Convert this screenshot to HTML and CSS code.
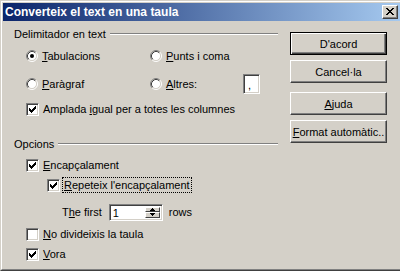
FILE: index.html
```html
<!DOCTYPE html>
<html>
<head>
<meta charset="utf-8">
<link rel="stylesheet" href="styles.css">
</head>
<body>
<div class="window">
  <div class="frame">
    <div class="titlebar">
      <span class="title">Converteix el text en una taula</span>
      <span class="close"><svg width="8" height="7" viewBox="0 0 8 7" shape-rendering="crispEdges"><path d="M0 0h2v1H0zM6 0h2v1H6zM1 1h2v1H1zM5 1h2v1H5zM2 2h4v1H2zM3 3h2v1H3zM2 4h4v1H2zM1 5h2v1H1zM5 5h2v1H5zM0 6h2v1H0zM6 6h2v1H6z" fill="#000"/></svg></span>
    </div>
    <div class="body">
      <div class="main">
        <div class="sep sep-first"><span class="sep-label">Delimitador en text</span><span class="sep-line"></span></div>
        <div class="row row-tab">
          <div class="opt col1">
            <svg class="radio" width="12" height="12" viewBox="0 0 12 12"><circle cx="6" cy="6" r="4.5" fill="#fff"/><path d="M2.11 9.89A5.5 5.5 0 0 1 9.89 2.11" stroke="#808080" fill="none"/><path d="M9.89 2.11A5.5 5.5 0 0 1 2.11 9.89" stroke="#fff" fill="none"/><path d="M2.82 9.18A4.5 4.5 0 0 1 9.18 2.82" stroke="#404040" fill="none"/><path d="M9.18 2.82A4.5 4.5 0 0 1 2.82 9.18" stroke="#d4d0c8" fill="none"/><circle cx="6" cy="6" r="2" fill="#000"/></svg>
            <span><u>T</u>abulacions</span>
          </div>
          <div class="opt">
            <svg class="radio" width="12" height="12" viewBox="0 0 12 12"><circle cx="6" cy="6" r="4.5" fill="#fff"/><path d="M2.11 9.89A5.5 5.5 0 0 1 9.89 2.11" stroke="#808080" fill="none"/><path d="M9.89 2.11A5.5 5.5 0 0 1 2.11 9.89" stroke="#fff" fill="none"/><path d="M2.82 9.18A4.5 4.5 0 0 1 9.18 2.82" stroke="#404040" fill="none"/><path d="M9.18 2.82A4.5 4.5 0 0 1 2.82 9.18" stroke="#d4d0c8" fill="none"/></svg>
            <span><u>P</u>unts i coma</span>
          </div>
        </div>
        <div class="row row-par">
          <div class="opt col1">
            <svg class="radio" width="12" height="12" viewBox="0 0 12 12"><circle cx="6" cy="6" r="4.5" fill="#fff"/><path d="M2.11 9.89A5.5 5.5 0 0 1 9.89 2.11" stroke="#808080" fill="none"/><path d="M9.89 2.11A5.5 5.5 0 0 1 2.11 9.89" stroke="#fff" fill="none"/><path d="M2.82 9.18A4.5 4.5 0 0 1 9.18 2.82" stroke="#404040" fill="none"/><path d="M9.18 2.82A4.5 4.5 0 0 1 2.82 9.18" stroke="#d4d0c8" fill="none"/></svg>
            <span><u>P</u>aràgraf</span>
          </div>
          <div class="opt col2">
            <svg class="radio" width="12" height="12" viewBox="0 0 12 12"><circle cx="6" cy="6" r="4.5" fill="#fff"/><path d="M2.11 9.89A5.5 5.5 0 0 1 9.89 2.11" stroke="#808080" fill="none"/><path d="M9.89 2.11A5.5 5.5 0 0 1 2.11 9.89" stroke="#fff" fill="none"/><path d="M2.82 9.18A4.5 4.5 0 0 1 9.18 2.82" stroke="#404040" fill="none"/><path d="M9.18 2.82A4.5 4.5 0 0 1 2.82 9.18" stroke="#d4d0c8" fill="none"/></svg>
            <span><u>A</u>ltres:</span>
          </div>
          <div class="field sep-field">,</div>
        </div>
        <div class="row row-amp">
          <div class="opt">
            <span class="cb"><svg width="7" height="7" viewBox="0 0 7 7" shape-rendering="crispEdges"><path d="M0 2h1v3H0zM1 3h1v3H1zM2 4h1v3H2zM3 3h1v3H3zM4 2h1v3H4zM5 1h1v3H5zM6 0h1v3H6z" fill="#000"/></svg></span>
            <span>Amplada <u>i</u>gual per a totes les columnes</span>
          </div>
        </div>
        <div class="sep sep-second"><span class="sep-label">Opcions</span><span class="sep-line"></span></div>
        <div class="row row-enc">
          <div class="opt">
            <span class="cb"><svg width="7" height="7" viewBox="0 0 7 7" shape-rendering="crispEdges"><path d="M0 2h1v3H0zM1 3h1v3H1zM2 4h1v3H2zM3 3h1v3H3zM4 2h1v3H4zM5 1h1v3H5zM6 0h1v3H6z" fill="#000"/></svg></span>
            <span><u>E</u>ncapçalament</span>
          </div>
        </div>
        <div class="row row-rep">
          <div class="opt">
            <span class="cb"><svg width="7" height="7" viewBox="0 0 7 7" shape-rendering="crispEdges"><path d="M0 2h1v3H0zM1 3h1v3H1zM2 4h1v3H2zM3 3h1v3H3zM4 2h1v3H4zM5 1h1v3H5zM6 0h1v3H6z" fill="#000"/></svg></span>
            <span class="focus"><u>R</u>epeteix l'encapçalament</span>
          </div>
        </div>
        <div class="row row-spin">
          <span>T<u>h</u>e first</span>
          <div class="spin">
            <span class="spin-val">1</span>
            <span class="spin-btns">
              <span class="spin-btn"><svg width="5" height="3" viewBox="0 0 5 3" shape-rendering="crispEdges"><path d="M2 0h1v1h1v1h1v1H0V2h1V1h1z" fill="#000"/></svg></span>
              <span class="spin-btn"><svg width="5" height="3" viewBox="0 0 5 3" shape-rendering="crispEdges"><path d="M0 0h5v1H4v1H3v1H2V2H1V1H0z" fill="#000"/></svg></span>
            </span>
          </div>
          <span>rows</span>
        </div>
        <div class="row row-nodiv">
          <div class="opt">
            <span class="cb"></span>
            <span><u>N</u>o divideixis la taula</span>
          </div>
        </div>
        <div class="row row-vora">
          <div class="opt">
            <span class="cb"><svg width="7" height="7" viewBox="0 0 7 7" shape-rendering="crispEdges"><path d="M0 2h1v3H0zM1 3h1v3H1zM2 4h1v3H2zM3 3h1v3H3zM4 2h1v3H4zM5 1h1v3H5zM6 0h1v3H6z" fill="#000"/></svg></span>
            <span><u>V</u>ora</span>
          </div>
        </div>
      </div>
      <div class="buttons">
        <div class="btn default"><span class="btn-in">D'acord</span></div>
        <div class="btn btn-cancel"><span class="btn-in">Cancel·la</span></div>
        <div class="btn btn-help"><span class="btn-in"><u>A</u>juda</span></div>
        <div class="btn btn-auto"><span class="btn-in"><u>F</u>ormat automàtic..</span></div>
      </div>
    </div>
  </div>
</div>
</body>
</html>
```

FILE: styles.css
```css
html, body {
  margin: 0;
  padding: 0;
  background: #d4d0c8;
}
body {
  width: 400px;
  height: 271px;
  overflow: hidden;
  font-family: "Liberation Sans", Arial, sans-serif;
  font-size: 11px;
  color: #000;
}
.window {
  width: 402px;
  height: 271px;
  box-sizing: border-box;
  border-top: 1px solid #d4d0c8;
  border-left: 1px solid #d4d0c8;
  border-bottom: 1px solid #404040;
}
.frame {
  height: 100%;
  box-sizing: border-box;
  border-top: 1px solid #fff;
  border-left: 1px solid #fff;
  border-bottom: 1px solid #808080;
  padding: 1px 0 0 1px;
}
.titlebar {
  height: 18px;
  display: flex;
  align-items: center;
  justify-content: space-between;
  padding: 0 4px 0 2px;
  background: linear-gradient(to right, #0a246a, #a6caf0);
}
.title {
  color: #fff;
  font-weight: bold;
  font-size: 12px;
}
.close {
  width: 16px;
  height: 14px;
  box-sizing: border-box;
  background: #d4d0c8;
  border: 1px solid;
  border-color: #fff #404040 #404040 #fff;
  box-shadow: inset -1px -1px #808080;
  display: flex;
  align-items: center;
  justify-content: center;
  padding: 0 1px 1px 0;
}
.close svg { display: block; }
.body {
  display: flex;
}
.main {
  width: 275px;
  padding: 4px 0 0 11px;
  box-sizing: border-box;
  display: flex;
  flex-direction: column;
}
.sep {
  height: 18px;
  display: flex;
  align-items: center;
  gap: 4px;
}
.sep-line {
  flex: 1;
  height: 0;
  border-top: 1px solid #808080;
  border-bottom: 1px solid #fff;
}
.sep-second { margin-top: 17px; }
.row {
  height: 18px;
  display: flex;
  align-items: center;
  padding-left: 12px;
}
.row-tab { margin-top: 4px; }
.row-par { margin-top: 9px; height: 20px; }
.row-amp { margin-top: 6px; }
.row-enc { margin-top: 3px; }
.row-rep { margin-top: 2px; padding-left: 33px; }
.row-spin { margin-top: 9px; padding-left: 48px; gap: 6px; }
.row-nodiv { margin-top: 4px; }
.row-vora { margin-top: 2px; }
.opt {
  display: flex;
  align-items: center;
  gap: 4px;
  white-space: nowrap;
}
.col1 { width: 124px; }
.col2 { width: 93px; }
.radio { display: block; flex: none; }
.cb {
  width: 13px;
  height: 13px;
  box-sizing: border-box;
  flex: none;
  background: #fff;
  border: 1px solid;
  border-color: #808080 #fff #fff #808080;
  box-shadow: inset 1px 1px #404040, inset -1px -1px #d4d0c8;
  display: flex;
  align-items: center;
  justify-content: center;
}
.cb svg { display: block; }
.focus {
  outline: 1px dotted #000;
  outline-offset: 1px;
}
.field {
  width: 17px;
  height: 20px;
  box-sizing: border-box;
  background: #fff;
  border: 1px solid;
  border-color: #808080 #fff #fff #808080;
  box-shadow: inset 1px 1px #404040, inset -1px -1px #d4d0c8;
  padding: 5px 0 0 4px;
  line-height: 11px;
}
.spin {
  width: 54px;
  height: 17px;
  box-sizing: border-box;
  background: #fff;
  border: 1px solid;
  border-color: #808080 #fff #fff #808080;
  box-shadow: inset 1px 1px #404040, inset -1px -1px #d4d0c8;
  display: flex;
  padding: 2px 2px 2px 3px;
  margin-left: 1px;
}
.spin-val {
  flex: 1;
  line-height: 13px;
}
.spin-btns {
  width: 15px;
  display: flex;
  flex-direction: column;
}
.spin-btn {
  flex: 1;
  background: #d4d0c8;
  box-sizing: border-box;
  border: 1px solid;
  border-color: #fff #404040 #404040 #fff;
  display: flex;
  align-items: center;
  justify-content: center;
}
.spin-btn svg { display: block; }
.buttons {
  width: 97px;
  margin-left: 12px;
  padding-top: 11px;
  display: flex;
  flex-direction: column;
}
.btn {
  height: 23px;
  box-sizing: border-box;
  border: 1px solid;
  border-color: #fff #404040 #404040 #fff;
  box-shadow: inset -1px -1px #808080;
  display: flex;
  align-items: center;
  justify-content: center;
  overflow: hidden;
  white-space: nowrap;
}
.btn.default {
  border: 1px solid #000;
  box-shadow: inset 1px 1px #fff, inset -1px -1px #404040, inset -2px -2px #808080;
}
.btn-cancel { margin-top: 5px; }
.btn-help { margin-top: 9px; }
.btn-auto { margin-top: 5px; }
.btn-in { flex: none; }
```
